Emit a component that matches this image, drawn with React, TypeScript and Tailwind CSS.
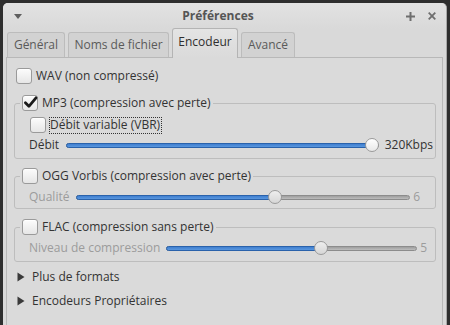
import React from "react";

function Check({ checked }: { checked?: boolean }) {
  return (
    <span className="relative w-[16px] h-[16px] shrink-0 rounded-[3px] border border-[#9a9a9a] bg-gradient-to-b from-[#fcfcfc] to-[#e6e6e6] shadow-[inset_0_1px_0_#ffffff] flex items-center justify-center">
      {checked && (
        <svg width="15" height="15" viewBox="0 0 15 15" className="absolute left-[0px] top-[-1px]">
          <path d="M2.4 7.8 L5.9 11.3 L13 2.8" fill="none" stroke="#1a1a1a" strokeWidth="2.8" strokeLinecap="round" strokeLinejoin="round" />
        </svg>
      )}
    </span>
  );
}

function Slider({ frac, disabled }: { frac: number; disabled?: boolean }) {
  const thumb = 14;
  return (
    <div className="relative flex-1 h-[14px] flex items-center">
      <div className="w-full h-[5px] rounded-full border border-[#8c8c8c] bg-gradient-to-b from-[#9e9e9e] to-[#bdbdbd]" />
      <div
        className="absolute left-0 h-[5px] rounded-full border border-[#2a62ab] bg-gradient-to-b from-[#3f7fd0] to-[#5a97de]"
        style={{ width: `calc(${frac} * (100% - ${thumb}px) + ${thumb / 2}px)` }}
      />
      <div
        className={
          "absolute top-0 w-[14px] h-[14px] rounded-full border border-[#9a9a9a] bg-gradient-to-b " +
          (disabled ? "from-[#eeeeee] to-[#d6d6d6]" : "from-[#ffffff] to-[#e8e8e8]")
        }
        style={{ left: `calc(${frac} * (100% - ${thumb}px))` }}
      />
    </div>
  );
}

function Tri() {
  return (
    <svg width="8" height="10" viewBox="0 0 8 10" className="shrink-0">
      <path d="M0.5 0.5 L7.5 5 L0.5 9.5 Z" fill="#3a3a3a" />
    </svg>
  );
}

export default function App() {
  return (
    <div className="w-[450px] h-[325px] bg-[#2e2e2e] overflow-hidden font-['Open_Sans','Noto_Sans',sans-serif] text-[12px] text-[#333333]">
      <div className="ml-[3px] mt-[3px] w-[444px] h-[322px] rounded-t-[5px] bg-[#d9d9d9] border-r border-[#a8a8a8] flex flex-col">
        {/* title bar */}
        <div className="h-[26px] shrink-0 flex items-center rounded-t-[5px] bg-gradient-to-b from-[#e2e2e2] to-[#d9d9d9] relative">
          <div className="w-[27px] flex justify-center pl-[3px]">
            <svg width="8" height="5" viewBox="0 0 8 5">
              <path d="M0 0 L8 0 L4 5 Z" fill="#5e5e5e" />
            </svg>
          </div>
          <div className="flex-1 text-center font-bold text-[#555555] leading-none pb-[1px]">Préférences</div>
          <div className="flex items-center gap-[13px] pr-[10px]">
            <svg width="9" height="9" viewBox="0 0 9 9">
              <path d="M4.5 0 V9 M0 4.5 H9" stroke="#6e6e6e" strokeWidth="2" />
            </svg>
            <svg width="8" height="8" viewBox="0 0 8 8">
              <path d="M0.7 0.7 L7.3 7.3 M7.3 0.7 L0.7 7.3" stroke="#6e6e6e" strokeWidth="1.8" />
            </svg>
          </div>
        </div>
        {/* tabs */}
        <div className="h-[28px] shrink-0 flex items-end gap-[3px] pl-[4px]">
          <div className="w-[58px] h-[25px] flex items-center justify-center rounded-t-[3px] border border-b-0 border-[#bcbcbc] bg-[#d2d2d2] text-[#5a5a5a]">Général</div>
          <div className="w-[101px] h-[25px] flex items-center justify-center rounded-t-[3px] border border-b-0 border-[#bcbcbc] bg-[#d2d2d2] text-[#5a5a5a]">Noms de fichier</div>
          <div className="relative z-10 mb-[-1px] w-[66px] h-[30px] flex items-center justify-center pb-[3px] rounded-t-[3px] border border-b-0 border-[#b4b4b4] bg-gradient-to-b from-[#e4e4e4] to-[#dadada] text-[#2e2e2e]">Encodeur</div>
          <div className="w-[54px] h-[25px] flex items-center justify-center rounded-t-[3px] border border-b-0 border-[#bcbcbc] bg-[#d2d2d2] text-[#5a5a5a]">Avancé</div>
        </div>
        {/* panel */}
        <div className="flex-1 ml-[3px] mr-[3px] border border-b-0 border-[#b8b8b8] bg-[#dadada] pl-[7px] pr-[6px] pt-[10px] flex flex-col">
          <div className="ml-[2px] h-[16px] flex items-center gap-[4px]">
            <Check />
            <span>WAV (non compressé)</span>
          </div>

          <fieldset className="mt-[11px] border border-[#bdbdbd] rounded-[3px] pl-[5px] pr-[2px] pb-[5px]">
            <legend className="px-[2px]">
              <span className="flex items-center h-[16px] gap-[4px]">
                <Check checked />
                <span>MP3 (compression avec perte)</span>
              </span>
            </legend>
            <div className="pl-[10px] flex flex-col">
              <div className="mt-[6px] h-[16px] flex items-center">
                <Check />
                <span className="ml-[3px] h-[17px] border border-dotted border-[#333] flex items-center pr-[1px] leading-none">Débit variable (VBR)</span>
              </div>
              <div className="mt-[4px] h-[16px] flex items-center">
                <span className="ml-[-1px]">Débit</span>
                <div className="ml-[7px] flex-1 flex">
                  <Slider frac={1} />
                </div>
                <span className="ml-[6px]">320Kbps</span>
              </div>
            </div>
          </fieldset>

          <fieldset className="mt-[9px] border border-[#bdbdbd] rounded-[3px] pl-[5px] pr-[2px] pb-[3px]">
            <legend className="px-[2px]">
              <span className="flex items-center h-[16px] gap-[4px]">
                <Check />
                <span>OGG Vorbis (compression avec perte)</span>
              </span>
            </legend>
            <div className="pl-[10px] flex flex-col">
              <div className="mt-[5px] h-[16px] flex items-center">
                <span className="ml-[-1px] text-[#9c9c9c]">Qualité</span>
                <div className="ml-[7px] flex-1 flex">
                  <Slider frac={0.6} disabled />
                </div>
                <span className="ml-[3px] mr-[13px] text-[#9c9c9c]">6</span>
              </div>
            </div>
          </fieldset>

          <fieldset className="mt-[10px] border border-[#bdbdbd] rounded-[3px] pl-[5px] pr-[2px] pb-[5px]">
            <legend className="px-[2px]">
              <span className="flex items-center h-[16px] gap-[4px]">
                <Check />
                <span>FLAC (compression sans perte)</span>
              </span>
            </legend>
            <div className="pl-[10px] flex flex-col">
              <div className="mt-[5px] h-[16px] flex items-center">
                <span className="ml-[-1px] text-[#9c9c9c]">Niveau de compression</span>
                <div className="ml-[6px] flex-1 flex">
                  <Slider frac={0.625} disabled />
                </div>
                <span className="ml-[3px] mr-[6px] text-[#9c9c9c]">5</span>
              </div>
            </div>
          </fieldset>

          <div className="mt-[7px] ml-[3px] h-[16px] flex items-center gap-[7px]">
            <Tri />
            <span>Plus de formats</span>
          </div>
          <div className="mt-[8px] ml-[3px] h-[16px] flex items-center gap-[7px]">
            <Tri />
            <span>Encodeurs Propriétaires</span>
          </div>
        </div>
      </div>
    </div>
  );
}
